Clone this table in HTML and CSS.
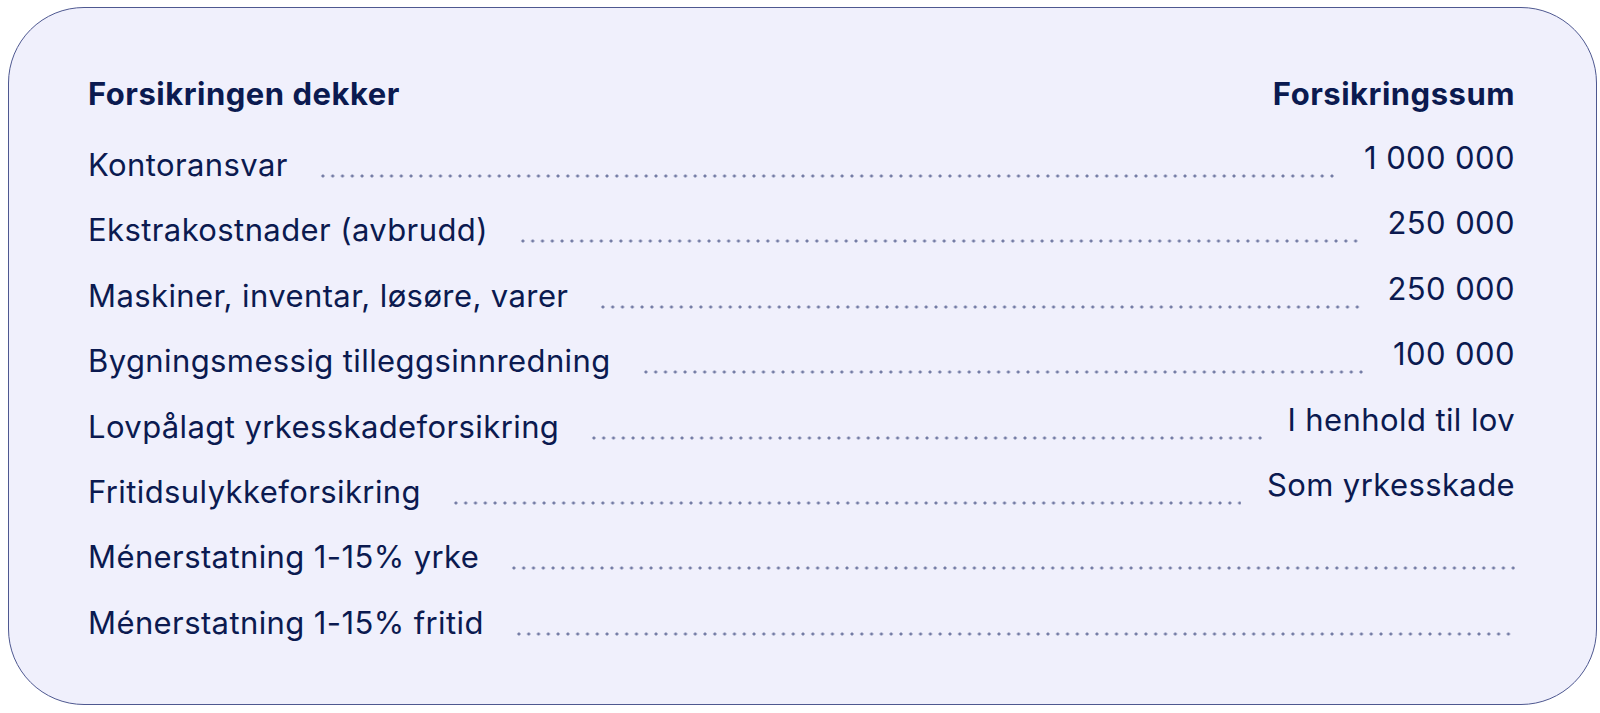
FILE: index.html
```html
<!DOCTYPE html>
<html lang="no">
<head>
<meta charset="utf-8">
<title>Forsikringen dekker</title>
<link rel="stylesheet" href="styles.css">
</head>
<body>
<section class="card">
  <div class="head">
    <span>Forsikringen dekker</span>
    <span>Forsikringssum</span>
  </div>
  <div class="row"><span class="label">Kontoransvar</span><span class="dots"></span><span class="value">1 000 000</span></div>
  <div class="row"><span class="label">Ekstrakostnader (avbrudd)</span><span class="dots"></span><span class="value">250 000</span></div>
  <div class="row"><span class="label">Maskiner, inventar, løsøre, varer</span><span class="dots"></span><span class="value">250 000</span></div>
  <div class="row"><span class="label">Bygningsmessig tilleggsinnredning</span><span class="dots"></span><span class="value">100 000</span></div>
  <div class="row"><span class="label">Lovpålagt yrkesskadeforsikring</span><span class="dots"></span><span class="value">I henhold til lov</span></div>
  <div class="row"><span class="label">Fritidsulykkeforsikring</span><span class="dots"></span><span class="value">Som yrkesskade</span></div>
  <div class="row"><span class="label">Ménerstatning 1-15% yrke</span><span class="dots dots-full"></span></div>
  <div class="row"><span class="label">Ménerstatning 1-15% fritid</span><span class="dots dots-full"></span></div>
</section>
</body>
</html>
```
FILE: styles.css
```css
html, body {
  margin: 0;
  background: #ffffff;
}
body {
  padding: 7px 3px 8px 8px;
  font-family: Inter, "Noto Sans", "Liberation Sans", sans-serif;
  color: #0b1a50;
}
.card {
  box-sizing: border-box;
  height: 698px;
  background: #f0f0fc;
  border: 1.5px solid #4e5890;
  border-radius: 76px;
  padding: 69px 81px 0 79px;
}
.head {
  display: flex;
  justify-content: space-between;
  font-size: 31px;
  line-height: 34px;
  letter-spacing: 0.5px;
  font-weight: 700;
  margin-bottom: 28px;
}
.row {
  display: flex;
  align-items: flex-start;
  height: 65.4px;
  font-size: 31px;
  line-height: 34px;
  letter-spacing: 0.4px;
}
.label {
  padding-top: 9px;
  white-space: nowrap;
}
.value {
  padding-top: 2px;
  white-space: nowrap;
}
.dots {
  flex: 1;
  height: 4px;
  margin: 35px 26px 0 30px;
  background-image: radial-gradient(circle, #737ba4 1.3px, transparent 1.8px);
  background-size: 9.8px 4px;
  background-repeat: repeat-x;
}
.dots-full {
  margin-right: 0;
}
```
